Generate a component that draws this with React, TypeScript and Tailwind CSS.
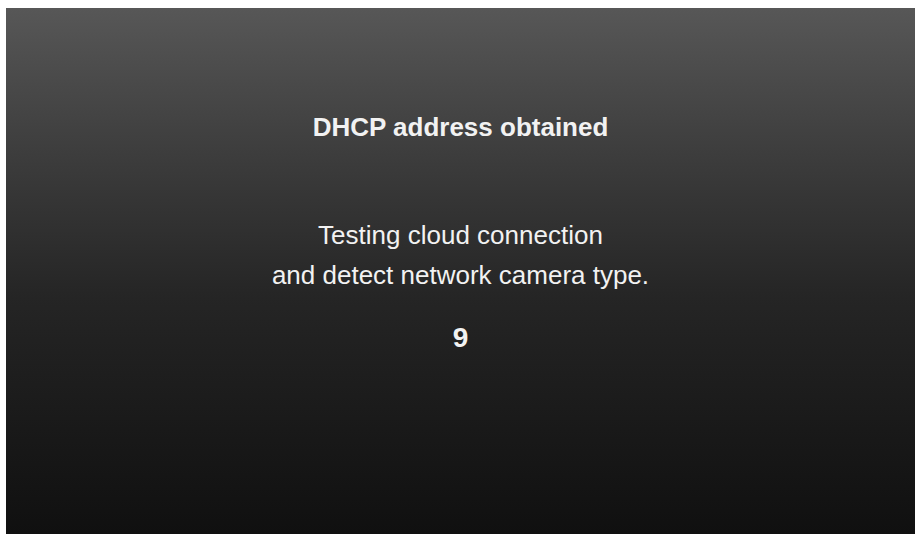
const NetworkSetupStatus = ({ countdown }: { countdown: number }) => {
  return (
    <div className="flex-1 flex flex-col items-center bg-gradient-to-b from-[#575757] via-[#252525] via-55% to-[#101010] text-[#f2f2f2] font-['Liberation_Sans',Arial,sans-serif]">
      <h1 className="mt-[106px] text-[26px] leading-[26px] font-bold">
        DHCP address obtained
      </h1>
      <div className="mt-[75px] text-center text-[26px] leading-[40px]">
        <p>Testing cloud connection</p>
        <p>and detect network camera type.</p>
      </div>
      <p className="mt-[29px] text-[28px] leading-[28px] font-bold">{countdown}</p>
    </div>
  );
};

export default function App() {
  return (
    <div className="w-[915px] h-[534px] flex flex-col bg-white pt-2 pl-1.5 overflow-hidden">
      <NetworkSetupStatus countdown={9} />
    </div>
  );
}
